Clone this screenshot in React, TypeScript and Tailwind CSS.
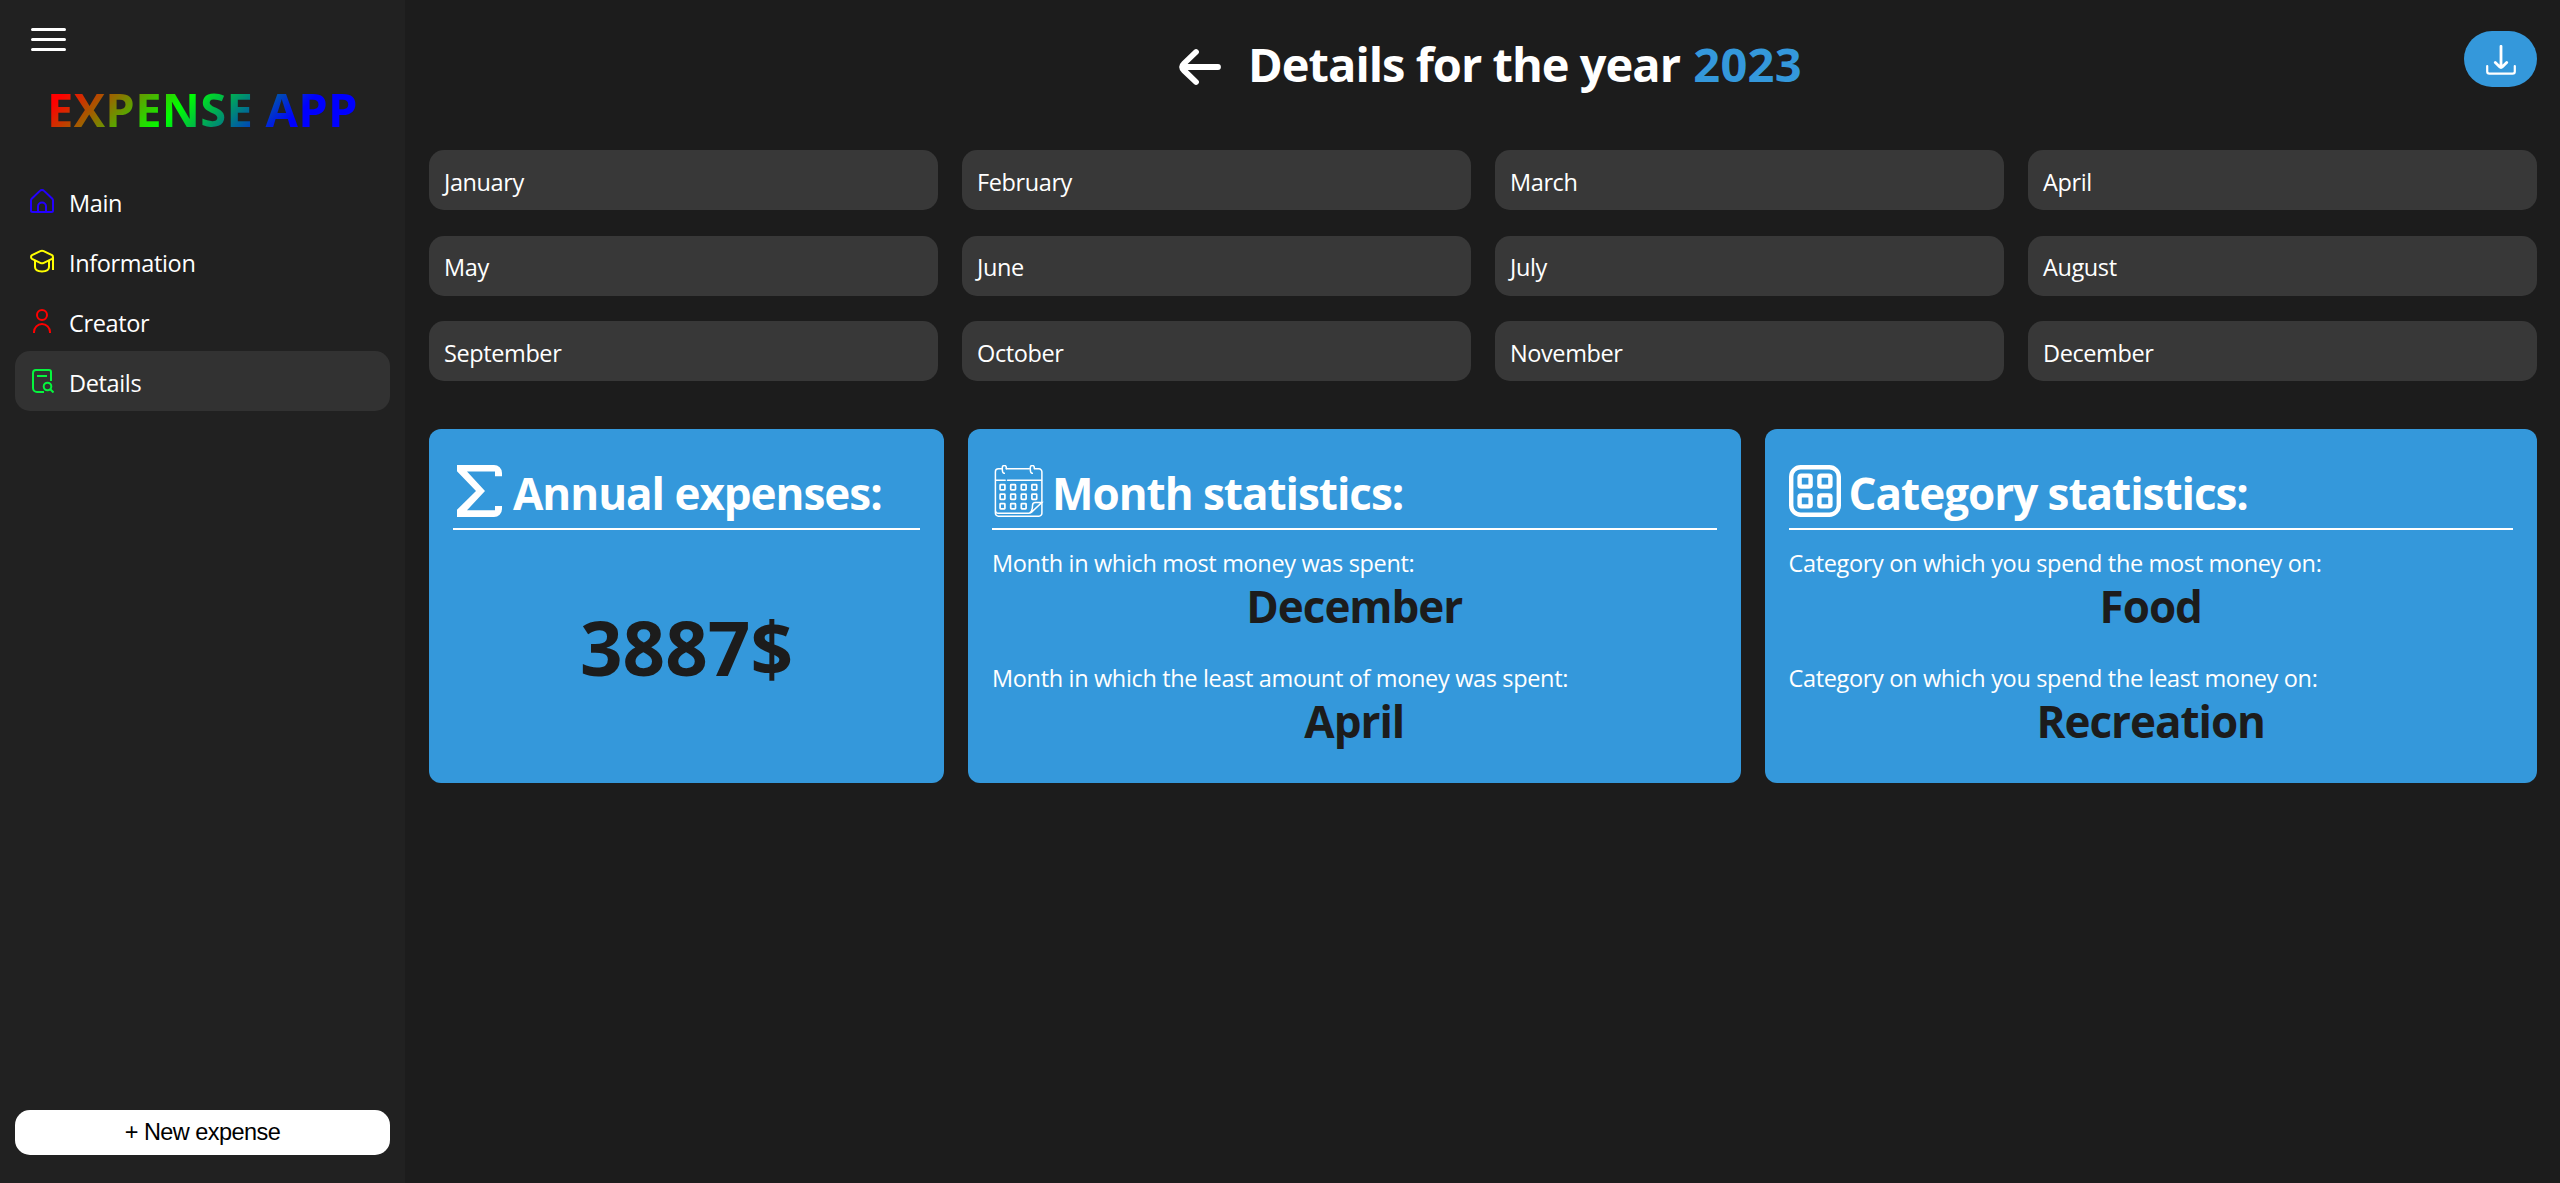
import type { ReactNode } from "react";

const MONTHS = [
  "January", "February", "March", "April",
  "May", "June", "July", "August",
  "September", "October", "November", "December",
];

function HomeIcon() {
  return (
    <svg className="size-6 shrink-0" viewBox="0 0 24 24" fill="none" stroke="#2400ff" strokeWidth="2">
      <path d="M1 11.6c0-.8.3-1.5.9-2.1L9.9 1.9c1.2-1.2 3-1.2 4.2 0l8 7.6c.6.6.9 1.3.9 2.1V21.5a1.500 1.500 0 0 1-1.500 1.500h-19A1.500 1.500 0 0 1 1 21.500Z" />
      <path d="M8 23v-5.500a4 4 0 0 1 8 0V23" />
    </svg>
  );
}

function CapIcon() {
  return (
    <svg className="size-6 shrink-0" viewBox="0 0 24 24" fill="none" stroke="#ffff00" strokeWidth="2">
      <path d="M10.3 2.2a4 4 0 0 1 3.4 0l8.3 4c1.3.8 1.3 2.8 0 3.6l-8.2 4.100a4 4 0 0 1-3.600 0L2 9.800C.7 9 .7 7 2 6.200Z" />
      <path d="M5 11.500V18c0 2.800 3.100 4.400 7 4.400s7-1.600 7-4.400v-6.500M23 8v13" />
    </svg>
  );
}

function UserIcon() {
  return (
    <svg className="size-6 shrink-0" viewBox="0 0 24 24" fill="none" stroke="#ff0000" strokeWidth="2">
      <circle cx="12" cy="6" r="5" />
      <path d="M4 24v-1a8 8 0 0 1 16 0v1" />
    </svg>
  );
}

function DetailsIcon() {
  return (
    <svg className="size-6 shrink-0" viewBox="0 0 24 24" fill="none" stroke="#05f53d" strokeWidth="2">
      <path d="M21 12V3a2 2 0 0 0-2-2H6a3 3 0 0 0-3 3v15a4 4 0 0 0 4 4h7M7 7h10" />
      <circle cx="17.5" cy="17.5" r="3.8" />
      <path d="m20.300 20.300 3.200 3.200" />
    </svg>
  );
}

function SigmaIcon() {
  return (
    <svg className="size-[52px] shrink-0" viewBox="0 0 52 52" fill="#fff">
      <path d="M4 0H41a8 8 0 0 1 8 8V11.300H42V6.500H14L32 26 14 45.300H42V41h7v3a8 8 0 0 1-8 8H4V44.700L23 26 4 6.200Z" />
    </svg>
  );
}

const CELLS = [
  [10.5, 22.2], [21.1, 22.2], [31.700, 22.2], [42.3, 22.2],
  [10.5, 31.7], [21.1, 31.7], [31.700, 31.7], [42.3, 31.7],
  [10.5, 41.2], [21.1, 41.2], [31.700, 41.2],
];

function CalendarIcon() {
  return (
    <svg className="size-[52px] shrink-0" viewBox="0 0 52 52" fill="none" stroke="#fff" strokeWidth="1.5" strokeLinecap="round">
      <path d="M9.500 3.800H6.400a3 3 0 0 0-3 3V48.200a3 3 0 0 0 3 3h40.500a3 3 0 0 0 3-3V6.800a3 3 0 0 0-3-3h-4M14.300 3.800h23" />
      <path d="M4 15.200h9.200M15.500 15.200h34M3.500 46c.2 1.500 1.100 2.300 2.600 2.300H36.500c1.300 0 2.200-.4 3.100-1.200L49.800 37.500H43.500a3 3 0 0 0-3 3c0 3-.4 5.800-2.600 7.200" />
      <path d="M10.300 4.500V2.500a2 2 0 0 1 4 0v1.300M10.300 4.500c0 2.200.4 3.600 2 3.800M38.300 4.500V2.500a2 2 0 0 1 4 0v1.300M38.300 4.500c0 2.200.4 3.600 2 3.800" />
      {CELLS.map(([x, y]) => (
        <rect key={`${x}-${y}`} x={x - 2.4} y={y - 2.6} width="4.8" height="5.2" rx="0.6" strokeWidth="1.7" />
      ))}
    </svg>
  );
}

function CategoryIcon() {
  return (
    <svg className="size-[52px] shrink-0" viewBox="0 0 52 52" fill="none" stroke="#fff" strokeWidth="4.4">
      <rect x="2.2" y="2.2" width="47.6" height="47.6" rx="9.5" />
      <rect x="10.6" y="10.6" width="11" height="11" rx="1.6" />
      <rect x="30.4" y="10.6" width="11" height="11" rx="1.6" />
      <rect x="10.6" y="30.4" width="11" height="11" rx="1.6" />
      <rect x="30.4" y="30.4" width="11" height="11" rx="1.6" />
    </svg>
  );
}

const NAV = [
  { label: "Main", icon: <HomeIcon /> },
  { label: "Information", icon: <CapIcon /> },
  { label: "Creator", icon: <UserIcon /> },
  { label: "Details", icon: <DetailsIcon />, active: true },
];

function Sidebar() {
  return (
    <aside className="flex w-[405px] shrink-0 flex-col bg-[#212121] px-[15px] pb-7">
      <button className="mt-[27px] ml-4 h-[26px] w-[35px]" aria-label="Toggle menu">
        <svg className="block h-[26px] w-[35px]" viewBox="0 0 35 26" stroke="#fff" strokeWidth="3" strokeLinecap="round">
          <path d="M1.5 2.5h32M1.5 12.5h32M1.5 22.5h32" />
        </svg>
      </button>
      <div className="mt-[23px] flex h-[66px] justify-center">
        <span className="bg-[linear-gradient(135deg,#f00_24px,#0f0_115px,#00f_204px)] bg-clip-text text-[47px] leading-[66px] font-bold tracking-[0.3px] text-transparent">
          EXPENSE APP
        </span>
      </div>
      <nav className="mt-[29px] flex flex-col">
        {NAV.map((item) => (
          <a
            key={item.label}
            className={`flex h-[60px] items-center gap-[15px] rounded-[15px] px-[15px] ${item.active ? "bg-[#323232]" : ""}`}
          >
            {item.icon}
            <span className="pt-[3px] text-[23.5px] leading-8 tracking-[-0.35px]">{item.label}</span>
          </a>
        ))}
      </nav>
      <button className="mt-auto h-[45px] rounded-[15px] bg-white pt-px font-['Liberation_Sans',sans-serif] text-[23.5px] tracking-[-0.55px] text-black">
        + New expense
      </button>
    </aside>
  );
}

function CardTitle({ icon, children }: { icon: ReactNode; children: ReactNode }) {
  return (
    <h2 className="flex items-center gap-2 border-b-2 border-white pb-[11px]">
      {icon}
      <span className="pt-1 text-[44px] leading-[48px] font-bold tracking-[-1.02px] whitespace-nowrap">{children}</span>
    </h2>
  );
}

function Stat({ label, value }: { label: string; value: string }) {
  return (
    <div>
      <p className="text-[23.5px] leading-8 tracking-[-0.34px] whitespace-nowrap">{label}</p>
      <p className="text-center text-[44px] leading-[55px] font-bold tracking-[-1.05px] text-[#1c1c1c]">{value}</p>
    </div>
  );
}

function Header() {
  return (
    <header className="grid h-32 grid-cols-[1fr_auto_1fr] items-center">
      <div />
      <div className="flex items-center pl-3">
        <svg className="mt-[5px] mr-6 size-12" viewBox="0 0 48 48" fill="none" stroke="#fff" strokeWidth="5.8" strokeLinecap="round" strokeLinejoin="round">
          <path d="M42 24H8M20 9 8 20.500c-2.600 2.400-2.600 4.600 0 7L20 39" />
        </svg>
        <h1 className="text-[47px] leading-[64px] font-bold tracking-[-1px] whitespace-nowrap">
          Details for the year <span className="ml-0.5 tracking-[0.3px] text-[#3498db]">2023</span>
        </h1>
      </div>
      <button className="mt-[31px] flex h-14 w-[73px] items-center justify-center self-start justify-self-end rounded-[28px] bg-[#3498db]" aria-label="Download">
        <svg className="mt-0.5 size-[30px]" viewBox="0 0 30 30" fill="none" stroke="#fff" strokeWidth="2.2" strokeLinecap="round" strokeLinejoin="round">
          <path d="M15 1.300V22.500M9.300 17.500l4.300 4.300c.9.900 1.900.9 2.800 0l4.300-4.300" strokeWidth="2.8" />
          <path d="M1.200 21v5.500a2.200 2.200 0 0 0 2.200 2.200h23.200a2.200 2.200 0 0 0 2.200-2.200V21" />
        </svg>
      </button>
    </header>
  );
}

export default function App() {
  return (
    <div className="flex h-screen w-full bg-[#1c1c1c] font-['Open_Sans','Noto_Sans',sans-serif] text-white">
      <Sidebar />
      <main className="flex-1 pr-[23px] pl-6">
        <Header />
        <section className="mt-[22px] grid grid-cols-4 gap-x-6 gap-y-[25.5px]">
          {MONTHS.map((month) => (
            <a key={month} className="flex h-[60px] items-center rounded-[15px] bg-[#383838] px-[15px]">
              <span className="pt-[3px] text-[23.5px] leading-8 tracking-[-0.4px]">{month}</span>
            </a>
          ))}
        </section>
        <section className="mt-12 grid h-[354px] grid-cols-[2fr_3fr_3fr] gap-6">
          <article className="flex flex-col rounded-xl bg-[#3498db] px-6 pt-9">
            <CardTitle icon={<SigmaIcon />}>Annual expenses:</CardTitle>
            <p className="flex flex-1 items-center justify-center pb-[18px] text-[74.5px] leading-none font-bold text-[#1c1c1c]">3887$</p>
          </article>
          <article className="rounded-xl bg-[#3498db] px-6 pt-9">
            <CardTitle icon={<CalendarIcon />}>Month statistics:</CardTitle>
            <div className="mt-[17px] flex flex-col gap-7">
              <Stat label="Month in which most money was spent:" value="December" />
              <Stat label="Month in which the least amount of money was spent:" value="April" />
            </div>
          </article>
          <article className="rounded-xl bg-[#3498db] px-6 pt-9">
            <CardTitle icon={<CategoryIcon />}>Category statistics:</CardTitle>
            <div className="mt-[17px] flex flex-col gap-7">
              <Stat label="Category on which you spend the most money on:" value="Food" />
              <Stat label="Category on which you spend the least money on:" value="Recreation" />
            </div>
          </article>
        </section>
      </main>
    </div>
  );
}
